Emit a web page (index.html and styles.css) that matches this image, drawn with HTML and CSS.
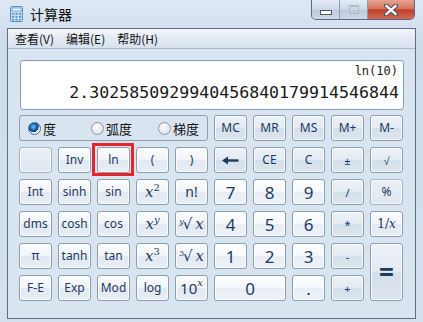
FILE: index.html
```html
<!DOCTYPE html>
<html lang="zh">
<head>
    <meta charset="UTF-8">
    <title>计算器</title>
    <link rel="stylesheet" href="styles.css">
</head>
<body>

<div class="window">
    <!-- Заголовок вікна -->
    <div class="titlebar">
        <svg class="app-icon" width="13" height="16" viewBox="0 0 13 16">
            <rect x="0.5" y="0.5" width="12" height="15" rx="1" fill="#bfdcf2" stroke="#5a8fbf"/>
            <rect x="2" y="2" width="9" height="3" fill="#e9f5ff" stroke="#6a9cc8" stroke-width="0.8"/>
            <g fill="#5d8fbd">
                <rect x="2" y="7" width="2" height="1.6"/><rect x="5.5" y="7" width="2" height="1.6"/><rect x="9" y="7" width="2" height="1.6"/>
                <rect x="2" y="10" width="2" height="1.6"/><rect x="5.5" y="10" width="2" height="1.6"/><rect x="9" y="10" width="2" height="1.6"/>
                <rect x="2" y="13" width="2" height="1.4"/><rect x="5.5" y="13" width="2" height="1.4"/><rect x="9" y="13" width="2" height="1.4"/>
            </g>
        </svg>
        <span class="title">计算器</span>
        <div class="win-controls">
            <div class="win-btn min"><span class="min-bar"></span></div>
            <div class="win-btn max"><span class="max-box"></span></div>
            <div class="win-btn close">
                <svg width="14" height="12" viewBox="0 0 14 12">
                    <path d="M2 1.5 L12 10.5 M12 1.5 L2 10.5" stroke="#4a4f55" stroke-width="4.2" stroke-linecap="round"/>
                    <path d="M2.3 1.8 L11.7 10.2 M11.7 1.8 L2.3 10.2" stroke="#fff" stroke-width="2.4" stroke-linecap="round"/>
                </svg>
            </div>
        </div>
    </div>

    <div class="client">
        <!-- Меню -->
        <div class="menubar">
            <span class="menu-item">查看(V)</span>
            <span class="menu-item">编辑(E)</span>
            <span class="menu-item">帮助(H)</span>
        </div>

        <div class="calc">
            <div class="display">
                <div class="expr">ln(10)</div>
                <div class="result">2.3025850929940456840179914546844</div>
            </div>

            <div class="keys">
                <div class="angle-group">
                    <label class="radio"><span class="dot checked"></span>度</label>
                    <label class="radio"><span class="dot"></span>弧度</label>
                    <label class="radio"><span class="dot"></span>梯度</label>
                </div>
                <button class="key mem">MC</button>
                <button class="key mem">MR</button>
                <button class="key mem">MS</button>
                <button class="key mem">M+</button>
                <button class="key mem">M-</button>

                <button class="key blank"></button>
                <button class="key">Inv</button>
                <button class="key marked">ln</button>
                <button class="key">(</button>
                <button class="key">)</button>
                <button class="key mem">
                    <svg width="17" height="9" viewBox="0 0 17 9">
                        <path d="M5 4.5 H16.5" stroke="#1e3a5f" stroke-width="2.4"/>
                        <polygon points="0,4.5 6,0.5 6,8.5" fill="#1e3a5f"/>
                    </svg>
                </button>
                <button class="key mem">CE</button>
                <button class="key mem">C</button>
                <button class="key mem small">±</button>
                <button class="key mem small">√</button>

                <button class="key">Int</button>
                <button class="key">sinh</button>
                <button class="key">sin</button>
                <button class="key math"><i>x</i><sup>2</sup></button>
                <button class="key big-txt">n!</button>
                <button class="key num">7</button>
                <button class="key num">8</button>
                <button class="key num">9</button>
                <button class="key mem small">/</button>
                <button class="key flat">%</button>

                <button class="key">dms</button>
                <button class="key">cosh</button>
                <button class="key">cos</button>
                <button class="key math"><i>x</i><sup><i>y</i></sup></button>
                <button class="key math"><span class="root"><sup class="idx"><i>y</i></sup>√</span><i>x</i></button>
                <button class="key num">4</button>
                <button class="key num">5</button>
                <button class="key num">6</button>
                <button class="key mem small">*</button>
                <button class="key math sm">1/<i>x</i></button>

                <button class="key">π</button>
                <button class="key">tanh</button>
                <button class="key">tan</button>
                <button class="key math"><i>x</i><sup>3</sup></button>
                <button class="key math"><span class="root"><sup class="idx">3</sup>√</span><i>x</i></button>
                <button class="key num">1</button>
                <button class="key num">2</button>
                <button class="key num">3</button>
                <button class="key mem small">-</button>
                <button class="key mem equals">=</button>

                <button class="key">F-E</button>
                <button class="key">Exp</button>
                <button class="key">Mod</button>
                <button class="key">log</button>
                <button class="key ten">10<sup><i>x</i></sup></button>
                <button class="key num zero">0</button>
                <button class="key num">.</button>
                <button class="key mem small">+</button>
            </div>
        </div>
    </div>
</div>

</body>
</html>
```
FILE: styles.css
```css
body {
    margin: 0;
    font-family: "Noto Sans", "Noto Sans CJK SC", sans-serif;
    background: #d6e2f0;
}
.window {
    width: 423px;
    height: 322px;
    background: linear-gradient(#dfe9f5, #cfdcec 40px, #d4e0ee);
    display: flex;
    flex-direction: column;
    overflow: hidden;
}
.titlebar {
    height: 28px;
    display: flex;
    align-items: flex-start;
    padding: 0 8px 0 10px;
    flex-shrink: 0;
}
.app-icon {
    margin-top: 6px;
}
.title {
    margin: 5px 0 0 7px;
    font-family: "Noto Sans CJK SC", sans-serif;
    font-size: 14px;
    line-height: 18px;
    color: #111;
}
.win-controls {
    margin-left: auto;
    display: flex;
    height: 19px;
    border: 1px solid #5c6b80;
    border-top: none;
    border-radius: 0 0 5px 5px;
    overflow: hidden;
}
.win-btn {
    height: 19px;
    display: flex;
    align-items: center;
    justify-content: center;
}
.win-btn.min, .win-btn.max {
    width: 27px;
    background: linear-gradient(#e4ecf5, #cbd7e6 50%, #bccadb 51%, #cdd9e7);
    border-right: 1px solid #8d9bb0;
}
.win-btn.close {
    width: 46px;
    background: linear-gradient(#e8a493, #d5735e 45%, #c0412a 52%, #d06a52);
}
.min-bar {
    width: 10px;
    height: 3px;
    margin-top: 6px;
    background: #fff;
    border: 1px solid #4c5866;
}
.max-box {
    width: 8px;
    height: 6px;
    border: 1px solid #a6b2c2;
    border-top-width: 2px;
    opacity: 0.8;
}
.client {
    flex: 1;
    margin: 0 7px 3px 7px;
    border: 1px solid #5f6e82;
    background: #d9e4f1;
    display: flex;
    flex-direction: column;
}
.menubar {
    height: 19px;
    background: linear-gradient(#f3f6fb, #e3eaf4 50%, #d7e1ee);
    border-bottom: 1px solid #aab8ca;
    display: flex;
    align-items: center;
    padding-left: 1px;
}
.menu-item {
    padding: 0 6px;
    font-family: "Noto Sans CJK SC", sans-serif;
    font-size: 12px;
    color: #111;
}
.calc {
    padding: 11px 11px 0 11px;
}
.display {
    margin-left: 1px;
    height: 48px;
    background: #fff;
    border: 1px solid #8fa2bb;
    border-radius: 3px;
    box-shadow: inset 0 0 0 1px #f2f6fa;
    padding: 0 4px 0 0;
    font-family: "DejaVu Sans Mono", monospace;
    color: #1a1a1a;
    text-align: right;
}
.expr {
    font-size: 12px;
    line-height: 14px;
    margin-top: 3px;
    margin-right: 1px;
}
.result {
    font-size: 16.6px;
    line-height: 20px;
    margin-top: 5px;
}
.keys {
    margin-top: 5px;
    display: grid;
    grid-template-columns: repeat(10, 33px);
    grid-template-rows: repeat(6, 26px);
    gap: 6px;
}
.angle-group {
    grid-column: span 5;
    border: 1px solid #8c9db4;
    border-radius: 3px;
    display: grid;
    grid-template-columns: 63px 67px auto;
    align-items: center;
    padding-left: 8px;
}
.radio {
    display: flex;
    align-items: center;
    font-family: "Noto Sans CJK SC", sans-serif;
    font-size: 13px;
    color: #111;
}
.dot {
    width: 11px;
    height: 11px;
    border-radius: 50%;
    border: 1px solid #8b97a6;
    background: radial-gradient(circle at 40% 35%, #fcfcfc, #d6dce3);
    margin-right: 2px;
}
.dot.checked {
    border-color: #3d6fa6;
    background: radial-gradient(circle at 40% 35%, #7fc3ff 0, #1f6fb8 3px, #123f7a 5px, #e8eef5 5.5px);
}
.key {
    padding: 0;
    border: 1px solid #8e9cb0;
    border-radius: 3px;
    background: linear-gradient(#fafcfe, #f0f4f9 48%, #e2e9f2 52%, #e8eef5);
    box-shadow: inset 0 0 0 1px rgba(255, 255, 255, 0.75);
    font-family: "Noto Sans", sans-serif;
    font-size: 12px;
    color: #1e3a5f;
    display: flex;
    align-items: center;
    justify-content: center;
    line-height: 1;
}
.key.mem {
    background: linear-gradient(#edf2f8, #e3eaf3 48%, #d5dfeb 52%, #dce5ef);
}
.key.small {
    font-size: 11px;
}
.key.blank, .key.flat {
    border-color: #a6b3c4;
    background: linear-gradient(#e9eff6, #dfe7f1);
}
.key.num {
    font-size: 17px;
    background: linear-gradient(#fdfeff, #f5f8fc 48%, #e8eef6 52%, #eef3f9);
}
.key.big-txt {
    font-size: 14px;
}
.key.math {
    font-family: "DejaVu Serif", "Liberation Serif", serif;
    font-size: 15px;
}
.key.math.sm {
    font-size: 12px;
}
.key.math sup {
    font-size: 10px;
    position: relative;
    top: -4px;
    vertical-align: baseline;
}
.key.math .root {
    margin-right: 3px;
    white-space: nowrap;
}
.key.math sup.idx {
    font-size: 8px;
    top: -5px;
    margin-right: -1px;
}
.key.ten {
    font-size: 15px;
}
.key.ten sup {
    font-family: "DejaVu Serif", serif;
    font-size: 10px;
    position: relative;
    top: -5px;
    vertical-align: baseline;
}
.key.equals {
    grid-row: span 2;
    font-size: 26px;
    font-weight: bold;
}
.key.zero {
    grid-column: span 2;
}
.key.marked {
    position: relative;
}
.key.marked::after {
    content: "";
    position: absolute;
    left: -6px;
    top: -5px;
    right: -5px;
    bottom: -4px;
    border: 3px solid #e5252a;
}
```
